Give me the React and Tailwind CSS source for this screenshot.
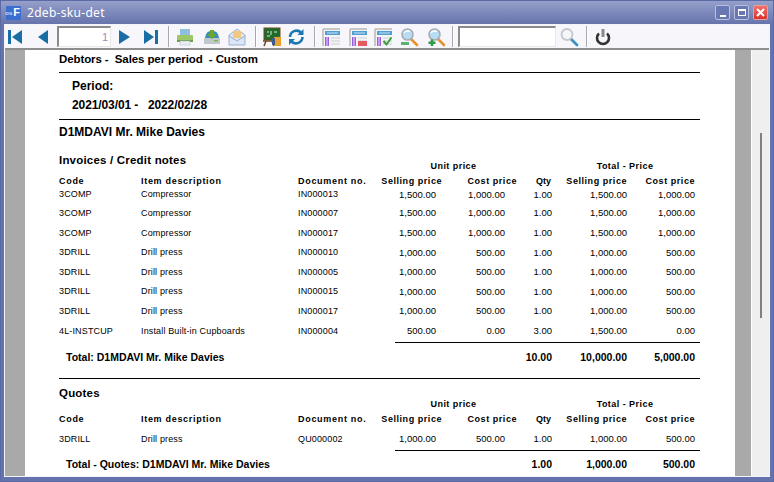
const rows = [
  ["3COMP", "Compressor", "IN000013", "1,500.00", "1,000.00", "1.00", "1,500.00", "1,000.00"],
  ["3COMP", "Compressor", "IN000007", "1,500.00", "1,000.00", "1.00", "1,500.00", "1,000.00"],
  ["3COMP", "Compressor", "IN000017", "1,500.00", "1,000.00", "1.00", "1,500.00", "1,000.00"],
  ["3DRILL", "Drill press", "IN000010", "1,000.00", "500.00", "1.00", "1,000.00", "500.00"],
  ["3DRILL", "Drill press", "IN000005", "1,000.00", "500.00", "1.00", "1,000.00", "500.00"],
  ["3DRILL", "Drill press", "IN000015", "1,000.00", "500.00", "1.00", "1,000.00", "500.00"],
  ["3DRILL", "Drill press", "IN000017", "1,000.00", "500.00", "1.00", "1,000.00", "500.00"],
  ["4L-INSTCUP", "Install Built-in Cupboards", "IN000004", "500.00", "0.00", "3.00", "1,500.00", "0.00"],
];

const cols = "grid grid-cols-[82px_157px_74px_64px_69px_47px_75px_68px] items-center";

function ColHeads() {
  return (
    <div className={`${cols} h-[13px] text-[9px] font-bold tracking-[0.55px]`}>
      <span className="tracking-[0.7px]">Code</span>
      <span className="tracking-[0.7px]">Item description</span>
      <span className="tracking-[0.7px]">Document no.</span>
      <span className="text-right -mr-[6px] whitespace-nowrap">Selling price</span>
      <span className="text-right -mr-[12px] whitespace-nowrap">Cost price</span>
      <span className="text-right tracking-normal mr-[1px]">Qty</span>
      <span className="text-right whitespace-nowrap">Selling price</span>
      <span className="text-right whitespace-nowrap">Cost price</span>
    </div>
  );
}

function Row({ r, className = "" }) {
  return (
    <div className={`${cols} ${className}`}>
      {r.map((v, i) => (
        <span key={i} className={i > 2 ? "text-right text-[9.5px]" : "text-[9px] tracking-[0.15px] whitespace-nowrap"}>{v}</span>
      ))}
    </div>
  );
}

function GroupHeads({ title, className = "" }) {
  return (
    <div className={`${cols} items-end ${className}`}>
      <span className="col-span-3 text-[11.5px] font-bold tracking-[0.2px] leading-[12px] self-start">{title}</span>
      <span className="col-span-2 text-[9px] font-bold tracking-[0.45px] pl-[30px] text-center leading-[12px]">Unit price</span>
      <span />
      <span className="col-span-2 text-[9px] font-bold tracking-[0.45px] pl-[3px] text-center leading-[12px]">Total - Price</span>
    </div>
  );
}

function TotalRow({ label, qty, sell, cost, className = "" }) {
  return (
    <div className={`${cols} text-[10.5px] font-bold ${className}`}>
      <span className="col-span-4 pl-[7px] whitespace-nowrap">{label}</span>
      <span />
      <span className="text-right">{qty}</span>
      <span className="text-right">{sell}</span>
      <span className="text-right">{cost}</span>
    </div>
  );
}

const Sep = ({ className = "" }) => <div className={`w-[2px] h-[21px] bg-[#a8a8a8] border-r border-white ${className}`} />;

const Box = ({ className = "", children }) => (
  <div className={`w-5 h-5 shrink-0 flex items-center justify-center ${className}`}>
    <svg width="20" height="20" viewBox="0 0 20 20">{children}</svg>
  </div>
);

function ReportIcon({ children }) {
  return (
    <>
      <path d="M2 2h17M2 2v17" stroke="#b8b8b8" strokeWidth="1.5" fill="none" />
      <rect x="3" y="3" width="16" height="16" fill="#f4f4f6" />
      <rect x="4" y="4" width="15" height="4" fill="#4f9fd0" />
      <rect x="6" y="5.5" width="11" height="1" fill="#cfe6f4" />
      <rect x="4" y="10" width="4" height="9" fill="#9a5fe0" />
      <rect x="5.5" y="10" width="1" height="9" fill="#e8dcf8" />
      <path d="M10 11h9M10 14h9M10 17h9" stroke="#d8dbe0" strokeWidth="1.5" />
      {children}
    </>
  );
}

function Magnifier({ children }) {
  return (
    <>
      <path d="M12 12l6 6" stroke="#e8912f" strokeWidth="2.6" strokeLinecap="round" />
      <circle cx="8.5" cy="7.5" r="5.5" fill="#b8dcf4" stroke="#a9adb3" strokeWidth="1.6" />
      <path d="M5 6a4 3 0 0 1 6-1.5" stroke="#fff" strokeWidth="1.3" fill="none" />
      {children}
    </>
  );
}

export default function App() {
  return (
    <div className="w-[774px] h-[482px] flex flex-col overflow-hidden bg-[#6473ab] border border-[#5a6aa4] font-['Liberation_Sans',Arial,sans-serif] text-black">
      {/* title bar */}
      <div className="h-[23px] shrink-0 flex items-center bg-gradient-to-b from-[#959fca] to-[#6674ac] pl-[5px] pr-[5px]">
        <div className="w-[15px] h-[14px] bg-[#3a6fd0] flex items-center justify-end text-white font-bold text-[11px] leading-none pr-[1px] rounded-[1px]">
          <span className="text-[6px] mr-[1px] text-[#cfe0ff]">os</span>F
        </div>
        <span className="ml-[6px] text-[12px] text-white tracking-[0.3px] font-['Noto_Sans',sans-serif]">2deb-sku-det</span>
        <div className="ml-auto flex gap-[4px]">
          <div className="w-[15px] h-[15px] rounded-[2px] border border-[#b8c0e0] bg-[#6a78b2] flex items-end justify-center pb-[2px]">
            <div className="w-[6px] h-[2px] bg-white" />
          </div>
          <div className="w-[15px] h-[15px] rounded-[2px] border border-[#b8c0e0] bg-[#6a78b2] flex items-center justify-center">
            <div className="w-[8px] h-[7px] border border-white border-t-2" />
          </div>
          <div className="w-[15px] h-[15px] rounded-[2px] border border-[#e8a0a0] bg-gradient-to-b from-[#f2706a] to-[#d8302a] flex items-center justify-center">
            <svg width="9" height="9" viewBox="0 0 9 9"><path d="M1 1l7 7M8 1L1 8" stroke="#fff" strokeWidth="2" /></svg>
          </div>
        </div>
      </div>

      <div className="flex-1 min-h-0 flex flex-col mx-[3px] mb-[4px] border border-[#f4f4f8] bg-white">
        {/* toolbar */}
        <div className="h-[25px] shrink-0 flex items-center bg-[#f7f7fb] border-b-2 border-[#8e8e8e]">
          <Box>
            <path d="M3 3h3v14H3zM17 3v14L7 10z" fill="#1a6ea6" />
          </Box>
          <Box className="ml-[8px]">
            <path d="M15 3v14L5 10z" fill="#1a6ea6" />
          </Box>
          <div className="ml-[4px] w-[54px] h-[21px] bg-white border-t-2 border-l-2 border-[#8a8a8a] border-b border-r border-b-[#e8e8e8] border-r-[#e8e8e8] text-right text-[11px] leading-[19px] pr-[2px] text-[#9a88c8]">1</div>
          <Box className="ml-[3px]">
            <path d="M5 3v14L16 10z" fill="#1a6ea6" />
          </Box>
          <Box className="ml-[7px]">
            <path d="M3 3v14L13 10zM14 3h3v14h-3z" fill="#1a6ea6" />
          </Box>
          <Sep className="ml-[7px]" />
          <Box className="ml-[5px]">
            <rect x="5" y="2" width="10" height="6" fill="#8fc0e0" />
            <rect x="2" y="8" width="16" height="7" rx="1" fill="#9cc86a" />
            <rect x="2" y="13" width="16" height="2" fill="#6e9c48" />
            <rect x="5" y="14" width="10" height="4" fill="#e8eef2" stroke="#b0b8c0" strokeWidth="0.5" />
          </Box>
          <Box className="ml-[7px]">
            <path d="M3 11C4 5 6 4 10 4s6 1 7 7z" fill="#3d8cb8" />
            <rect x="2" y="11" width="16" height="6" rx="1" fill="#c0c8cc" />
            <rect x="12" y="13" width="4" height="1.5" fill="#7cb84a" />
            <path d="M8 3h4v4h3l-5 5-5-5h3z" fill="#6aa82e" />
          </Box>
          <Box className="ml-[5px]">
            <path d="M2 8l8-6 8 6v10H2z" fill="#dce6f4" stroke="#9ab0d0" />
            <rect x="6" y="4" width="8" height="7" fill="#f4c880" />
            <path d="M2 9l8 5 8-5" fill="none" stroke="#9ab0d0" />
          </Box>
          <Sep className="ml-[8px]" />
          <Box className="ml-[5px]">
            <rect x="2" y="1" width="16" height="12" fill="#1f6b2c" stroke="#6a4a20" />
            <path d="M5 5h2M9 4v4M12 5h3M5 9h3" stroke="#dff0d8" strokeWidth="1" />
            <path d="M1 14h12M4 14l-2 5M10 14l2 5" stroke="#6a4a20" strokeWidth="1.5" />
            <rect x="12" y="10" width="7" height="9" fill="#e8a030" />
            <rect x="10" y="11" width="3" height="7" fill="#3a5a90" />
          </Box>
          <Box className="ml-[4px]">
            <path d="M4 10a6.5 6.5 0 0 1 11-4.5" fill="none" stroke="#1a78b0" strokeWidth="2.6" />
            <path d="M16.5 10a6.5 6.5 0 0 1-11 4.5" fill="none" stroke="#1a78b0" strokeWidth="2.6" />
            <path d="M17.5 2v6h-6zM3 18v-6h6z" fill="#1a78b0" />
          </Box>
          <Sep className="ml-[8px]" />
          <Box className="ml-[5px]">
            <ReportIcon />
          </Box>
          <Box className="ml-[7px]">
            <ReportIcon>
              <rect x="10" y="14" width="9" height="5" fill="#e85a60" />
            </ReportIcon>
          </Box>
          <Box className="ml-[5px]">
            <ReportIcon>
              <path d="M10.5 14l3 3.5 5-7" fill="none" stroke="#3f9e3a" strokeWidth="2" />
            </ReportIcon>
          </Box>
          <Box className="ml-[6px]">
            <Magnifier>
              <rect x="2" y="15" width="8" height="3" fill="#5cb070" />
            </Magnifier>
          </Box>
          <Box className="ml-[7px]">
            <Magnifier>
              <path d="M6 12.5v6.5M2.5 15.75h7" stroke="#2f9a4a" strokeWidth="2.6" />
            </Magnifier>
          </Box>
          <Sep className="ml-[6px]" />
          <div className="ml-[4px] w-[98px] h-[21px] bg-white border-t-2 border-l-2 border-[#8a8a8a] border-b border-r border-b-[#e8e8e8] border-r-[#e8e8e8]" />
          <Box className="ml-[3px]">
            <path d="M12 12l6 6" stroke="#3a90c0" strokeWidth="2.8" strokeLinecap="round" />
            <circle cx="8" cy="7.5" r="5.5" fill="#f4f6f8" stroke="#c4c8cc" strokeWidth="1.8" />
          </Box>
          <Sep className="ml-[7px]" />
          <Box className="ml-[5px]">
            <path d="M6 6.5a6 6 0 1 0 8 0" fill="none" stroke="#333" strokeWidth="2.6" />
            <rect x="8.5" y="2" width="3" height="8" fill="#8a8a8a" />
          </Box>
        </div>

        {/* report viewer */}
        <div className="flex-1 min-h-0 flex">
          <div className="w-[20px] bg-[#a9a9a9] shrink-0" />
          <div className="w-[710px] shrink-0 bg-white pl-[34px] overflow-hidden">
            <div className="w-[641px]">
              <div className="h-[22px] pb-[3px] flex items-center text-[11.5px] font-bold tracking-[-0.1px] whitespace-pre">Debtors -  Sales per period  - Custom</div>
              <div className="h-[1px] bg-black" />
              <div className="pl-[13px] pt-[5px] h-[46px] text-[12px] font-bold">
                <div className="h-[16px] flex items-center">Period:</div>
                <div className="mt-[3px] h-[16px] flex items-center tracking-[-0.1px]">2021/03/01 -&nbsp;&nbsp; 2022/02/28</div>
              </div>
              <div className="h-[1px] bg-black" />
              <div className="h-[24px] flex items-center text-[12px] font-bold">D1MDAVI Mr. Mike Davies</div>

              <div className="mt-[10px]" />
              <GroupHeads title="Invoices / Credit notes" className="h-[18px]" />
              <div className="mt-[3px]" />
              <ColHeads />
              {rows.map((r, i) => (
                <Row key={i} r={r} className={i === 0 ? "h-[13px]" : "h-[19.6px] items-end"} />
              ))}
              <div className="mt-[4px] h-[1px] bg-black ml-[336px]" />
              <TotalRow label="Total: D1MDAVI Mr. Mike Davies" qty="10.00" sell="10,000.00" cost="5,000.00" className="h-[30px]" />
              <div className="mt-[5px] h-[1px] bg-black" />

              <div className="mt-[8px]" />
              <GroupHeads title="Quotes" className="h-[23px]" />
              <div className="mt-[3px]" />
              <ColHeads />
              <Row r={["3DRILL", "Drill press", "QU000002", "1,000.00", "500.00", "1.00", "1,000.00", "500.00"]} className="h-[20px] items-end" />
              <div className="mt-[4px] h-[1px] bg-black ml-[336px]" />
              <TotalRow label="Total - Quotes: D1MDAVI Mr. Mike Davies" qty="1.00" sell="1,000.00" cost="500.00" className="h-[28px]" />
            </div>
          </div>
          <div className="w-[16px] bg-[#a9a9a9] shrink-0" />
          <div className="w-[1px] bg-white shrink-0" />
          <div className="flex-1 bg-[#efefef] flex justify-center">
            <div className="w-[2px] h-[185px] mt-[83px] bg-[#808080]" />
          </div>
        </div>
      </div>
    </div>
  );
}
